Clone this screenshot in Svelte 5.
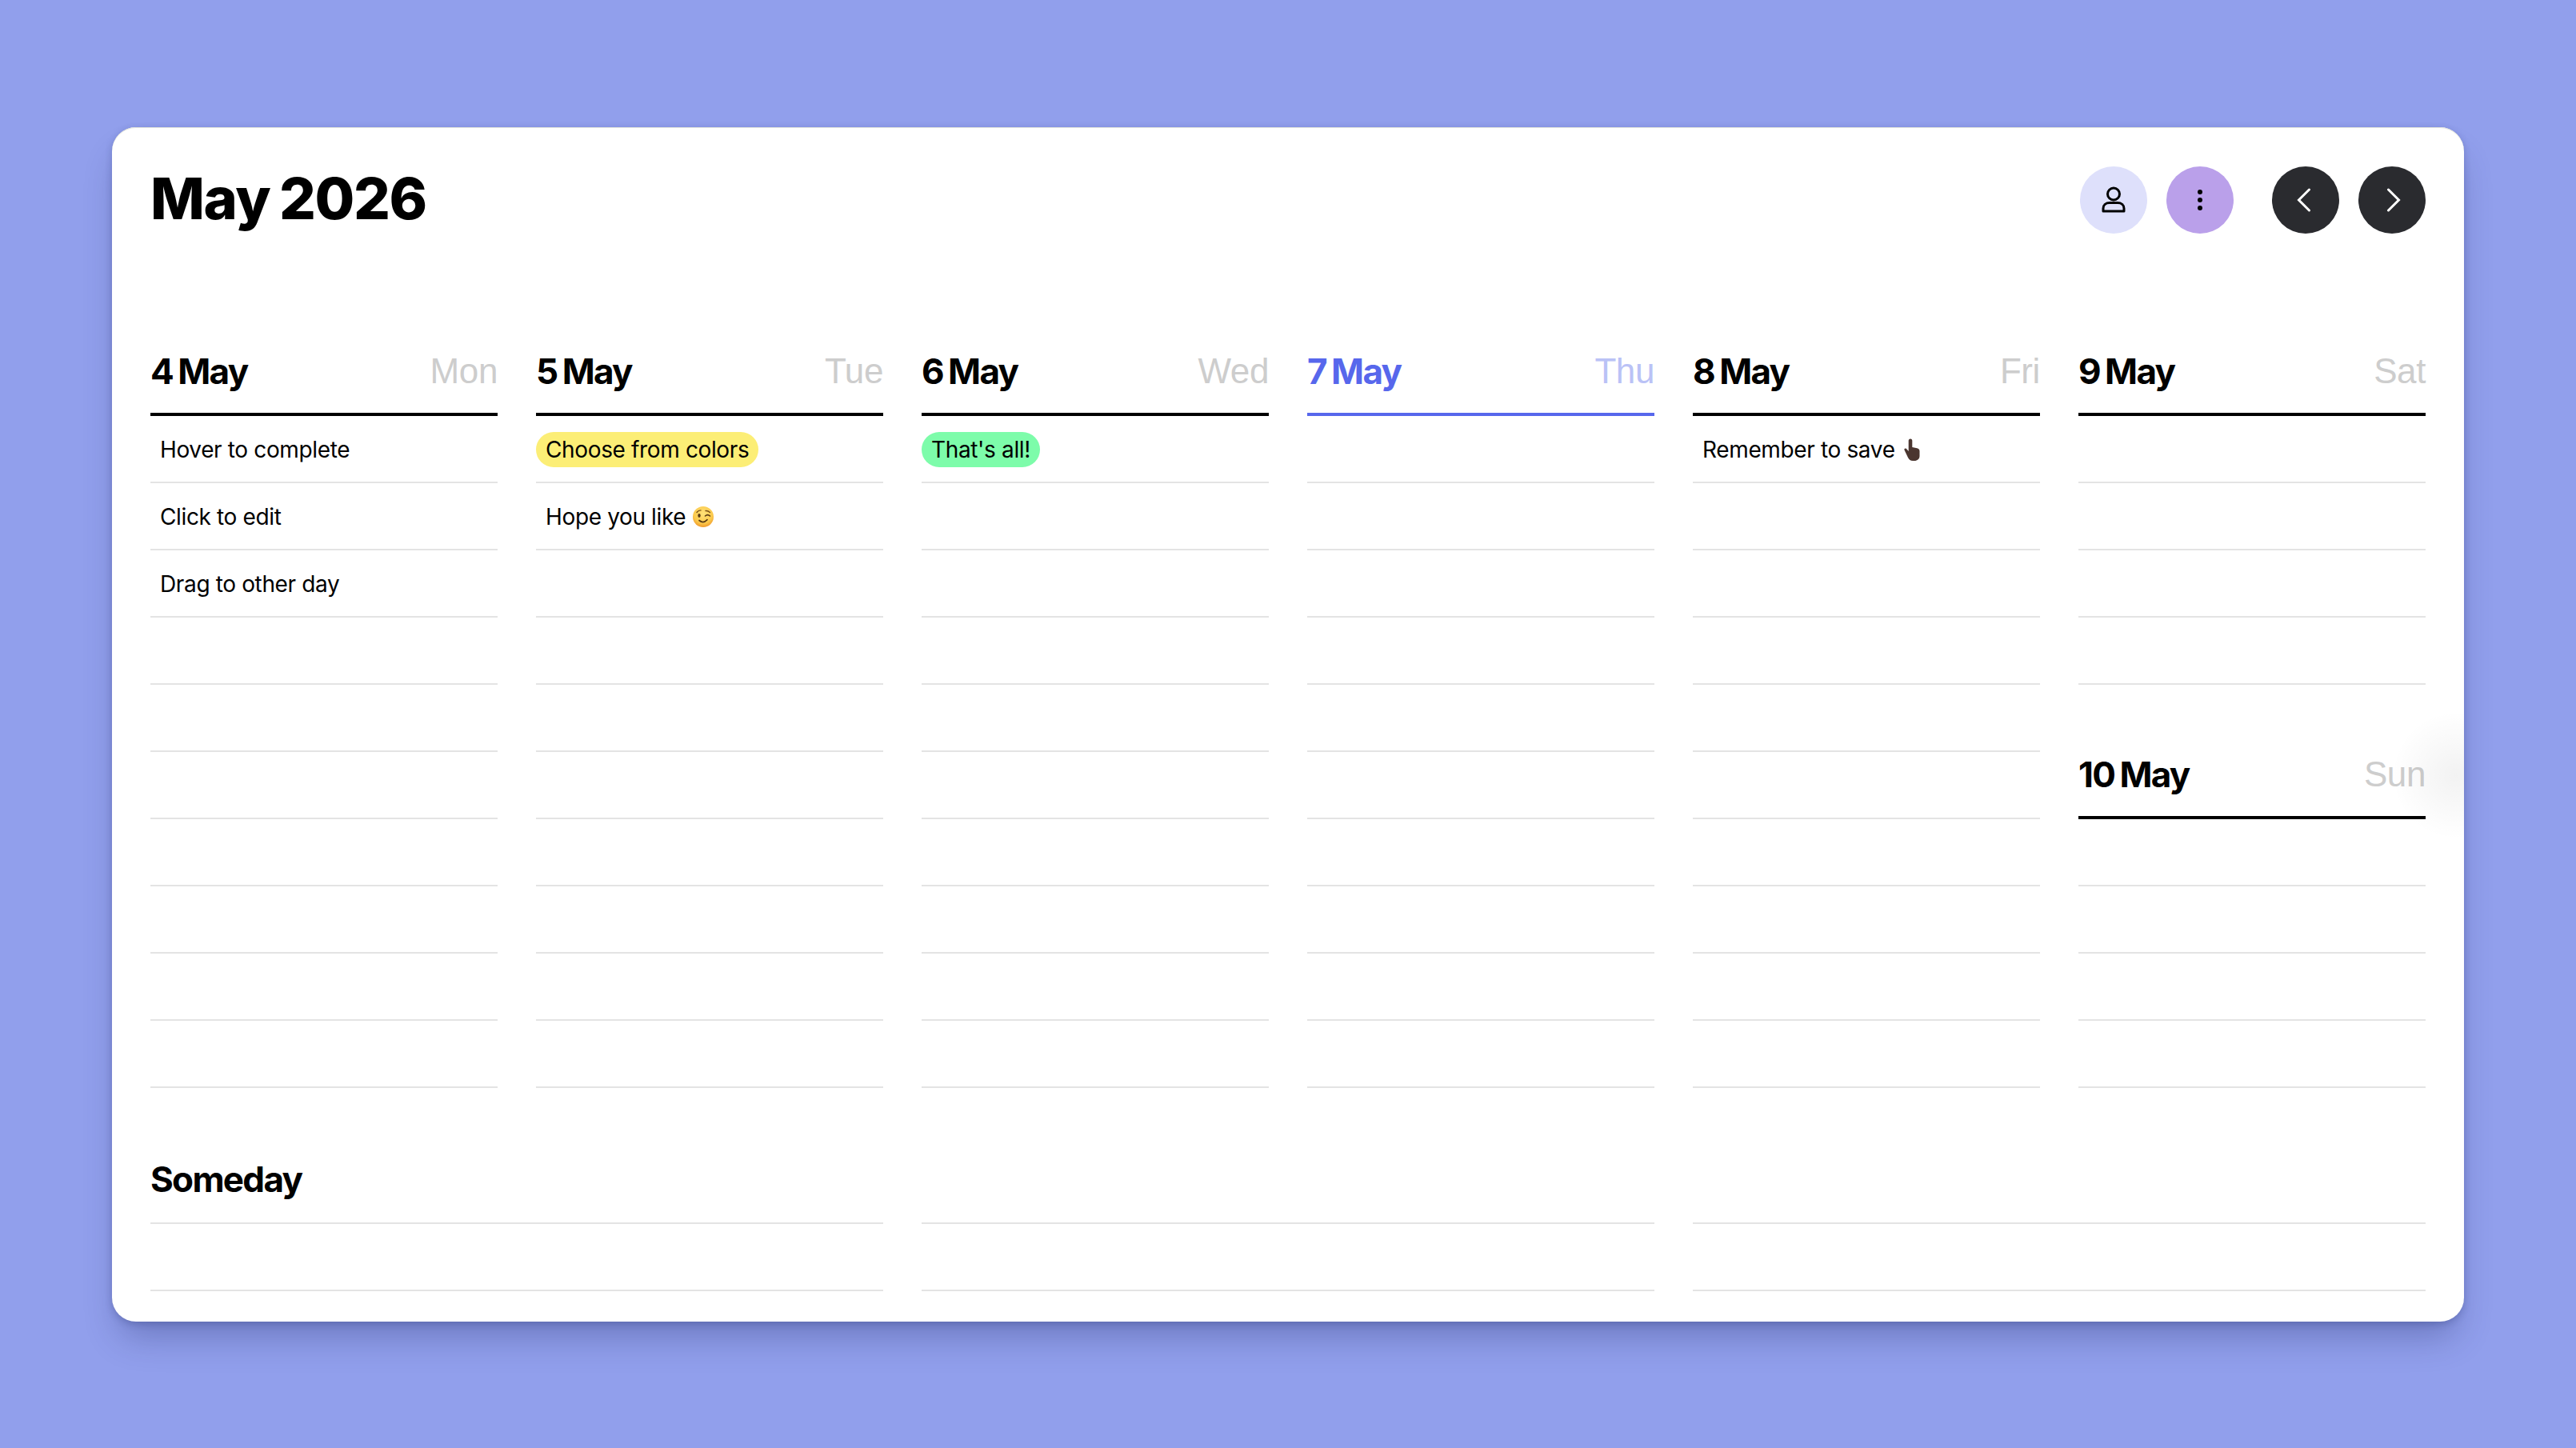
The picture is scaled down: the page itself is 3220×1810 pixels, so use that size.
<script>
  const R = 10;
  const days = [
    { d: '4 May', w: 'Mon', rows: [{ t: 'Hover to complete' }, { t: 'Click to edit' }, { t: 'Drag to other day' }] },
    { d: '5 May', w: 'Tue', rows: [{ t: 'Choose from colors', c: 'yellow' }, { t: 'Hope you like', e: 'wink' }] },
    { d: '6 May', w: 'Wed', rows: [{ t: "That's all!", c: 'green' }] },
    { d: '7 May', w: 'Thu', today: true, rows: [] },
    { d: '8 May', w: 'Fri', rows: [{ t: 'Remember to save', e: 'hand' }] }
  ];
  const pad = (rows, n) => [...rows, ...Array(Math.max(0, n - rows.length)).fill({ t: '' })];
</script>

{#snippet row(r)}
  <div class="row">
    {#if r.t}
      <span class="item {r.c ?? ''}">{r.t}</span>
      {#if r.e === 'wink'}
        <svg class="emoji" width="28" height="28" viewBox="0 0 28 28" aria-hidden="true">
          <defs><radialGradient id="f" cx="50%" cy="35%" r="65%"><stop offset="0" stop-color="#ffe27a"/><stop offset=".7" stop-color="#fbc94b"/><stop offset="1" stop-color="#f09a2c"/></radialGradient></defs>
          <circle cx="14" cy="14" r="13" fill="url(#f)"/>
          <ellipse cx="9" cy="12.5" rx="1.7" ry="2.4" fill="#5a3b14"/>
          <path d="M16.5 13q3-2.6 6 0" fill="none" stroke="#5a3b14" stroke-width="1.6" stroke-linecap="round"/>
          <path d="M6 8.5q2-2.6 5-2.6M17 6.5q3-.4 5.4 2" fill="none" stroke="#7a5218" stroke-width="1.4" stroke-linecap="round"/>
          <path d="M9 18.5q5 4.5 10-.8" fill="none" stroke="#5a3b14" stroke-width="1.7" stroke-linecap="round"/>
        </svg>
      {:else if r.e === 'hand'}
        <svg class="emoji hand" width="22" height="30" viewBox="0 0 22 30" aria-hidden="true">
          <path d="M9 1.5c1.5 0 2.3 1 2.3 2.4V12l6 1.3c2 .4 3.2 1.8 3.2 3.6V23c0 3.500-2.700 6-6.500 6H12c-3 0-4.500-1.500-6-4L1.500 15.500c-.7-1.500 1.300-2.700 2.500-1.500l2.700 3V3.900C6.700 2.500 7.600 1.500 9 1.500z" fill="#4b3630"/>
        </svg>
      {/if}
    {/if}
  </div>
{/snippet}

<main class="page">
  <section class="card">
    <header class="top">
      <h1>May 2026</h1>
      <div class="actions">
        <div class="group">
          <button class="btn lilac" aria-label="Profile">
            <svg width="30" height="34" viewBox="0 0 30 34" fill="none" stroke="#000" stroke-width="3"><circle cx="15" cy="9.500" r="7.500"/><path d="M2 31v-3.500C2 23 5.500 20.500 10 20.500h10c4.500 0 8 2.500 8 7V31z" stroke-linejoin="round"/></svg>
          </button>
          <button class="btn purple" aria-label="More">
            <svg width="8" height="28" viewBox="0 0 8 28" fill="#000"><circle cx="4" cy="4" r="3"/><circle cx="4" cy="14" r="3"/><circle cx="4" cy="24" r="3"/></svg>
          </button>
        </div>
        <div class="group">
          <button class="btn dark" aria-label="Previous">
            <svg class="prev" width="18" height="30" viewBox="0 0 18 30" fill="none" stroke="#fff" stroke-width="3" stroke-linecap="round"><path d="M15.500 2 2.500 15l13 13"/></svg>
          </button>
          <button class="btn dark" aria-label="Next">
            <svg class="next" width="18" height="30" viewBox="0 0 18 30" fill="none" stroke="#fff" stroke-width="3" stroke-linecap="round"><path d="M2.500 2l13 13-13 13"/></svg>
          </button>
        </div>
      </div>
    </header>

    <div class="week">
      {#each days as day}
        <div class="col">
          <div class="head" class:today={day.today}>
            <span class="date">{day.d}</span><span class="wd">{day.w}</span>
          </div>
          {#each pad(day.rows, R) as r}{@render row(r)}{/each}
        </div>
      {/each}
      <div class="col">
        <div class="head"><span class="date">9 May</span><span class="wd">Sat</span></div>
        {#each pad([], 4) as r}{@render row(r)}{/each}
        <div class="head second"><span class="date">10 May</span><span class="wd">Sun</span></div>
        {#each pad([], 4) as r}{@render row(r)}{/each}
      </div>
    </div>

    <div class="someday">
      <div class="col">
        <div class="some-head"><span class="date">Someday</span></div>
        {@render row({ t: '' })}
      </div>
      <div class="col">
        <div class="some-head"></div>
        {@render row({ t: '' })}
      </div>
      <div class="col">
        <div class="some-head"></div>
        {@render row({ t: '' })}
      </div>
    </div>
    <div class="glow"></div>
  </section>
</main>

<style>
  :global(body) { margin: 0; background: #919fec; }
  .page {
    width: 3220px; height: 1810px; box-sizing: border-box;
    padding: 159px 140px 158px;
    background: #919fec;
    font-family: "Liberation Sans", Arial, sans-serif;
    color: #000;
  }
  .card {
    position: relative;
    height: 100%; box-sizing: border-box;
    padding: 1px 48px 0;
    background: #fff;
    border-radius: 30px;
    overflow: clip;
    box-shadow: inset 0 1px 0 #e3e5da, 0 28px 44px -10px rgba(30, 40, 100, .32), 0 3px 10px rgba(30, 40, 100, .24);
  }
  .top { height: 278px; display: flex; justify-content: space-between; align-items: flex-start; }
  h1 {
    margin: 0; padding-top: 47px;
    font-family: Inter, "Liberation Sans", sans-serif;
    font-size: 72px; line-height: 82px; font-weight: 800; letter-spacing: -1.4px; word-spacing: -2.5px;
  }
  .actions { display: flex; gap: 48px; padding-top: 48px; }
  .group { display: flex; gap: 24px; }
  .btn {
    width: 84px; height: 84px; padding: 0; border: 0; border-radius: 50%;
    display: flex; align-items: center; justify-content: center;
  }
  .lilac { background: #dee0fb; }
  .purple { background: #baa0ea; }
  .dark { background: #2a2b2f; }
  .prev { margin-right: 4px; }
  .next { margin-left: 4px; }

  .week, .someday { display: grid; gap: 48px; }
  .week { grid-template-columns: repeat(6, 434px); }
  .someday { grid-template-columns: repeat(3, 916px); }

  .head {
    height: 82px; box-sizing: border-box;
    border-bottom: 4px solid #000;
    display: flex; justify-content: space-between; align-items: flex-start;
    font-size: 44px; line-height: 52px;
  }
  .head.second { height: 168px; padding-top: 86px; }
  .date { font-family: Inter, "Liberation Sans", sans-serif; font-weight: 700; letter-spacing: -1.7px; word-spacing: -2.5px; }
  .wd { color: #cdcdcd; letter-spacing: -.4px; }
  .today { border-color: #5767ec; color: #5767ec; }
  .today .wd { color: #bac2f6; }

  .row {
    height: 84px; box-sizing: border-box;
    border-bottom: 2px solid #e4e4e4;
    display: flex; align-items: center; gap: 8px;
    font-family: Inter, "Liberation Sans", sans-serif;
    font-size: 28px; letter-spacing: -.36px; padding-top: 2px;
  }
  .item { padding: 0 12px; height: 44px; line-height: 44px; border-radius: 22px; white-space: nowrap; }
  .yellow { background: #fcee76; }
  .green { background: #7dfcaa; }
  .emoji { margin-left: -12px; flex: none; }
  .hand { margin-left: -10px; }

  .some-head {
    height: 170px; box-sizing: border-box;
    border-bottom: 2px solid #e4e4e4;
    padding-top: 88px;
    font-size: 44px; line-height: 52px;
  }
  .glow {
    position: absolute; right: -70px; top: 730px; width: 160px; height: 160px;
    background: radial-gradient(closest-side, rgba(0,0,0,.05), rgba(0,0,0,0));
  }
</style>
